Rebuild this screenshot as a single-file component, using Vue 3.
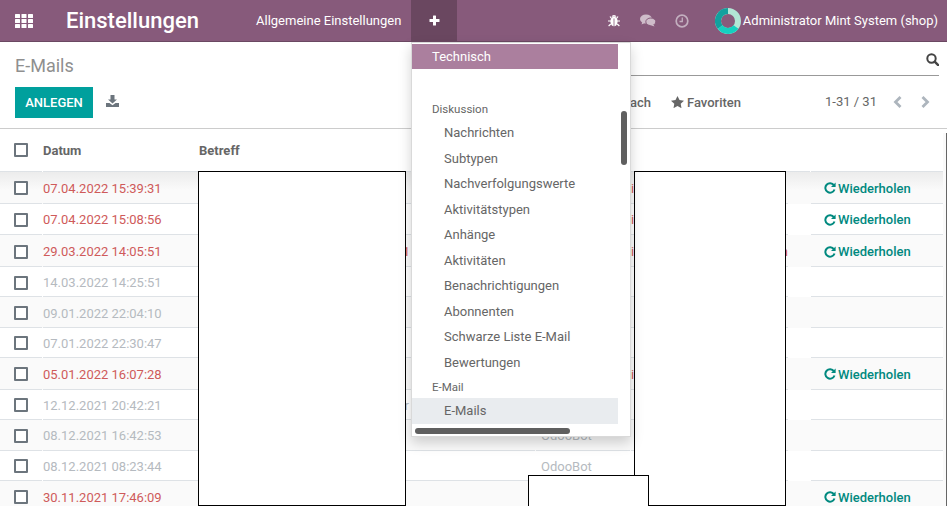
<template>
  <div class="page">
    <header class="navbar">
      <a class="apps">
        <svg width="18" height="14" viewBox="0 0 18 14" fill="#fff">
          <template v-for="r in 3" :key="r">
            <rect v-for="c in 3" :key="c" :x="(c - 1) * 6.5" :y="(r - 1) * 5" width="5" height="4" rx="0.5" />
          </template>
        </svg>
      </a>
      <span class="brand">Einstellungen</span>
      <a class="nav-link">Allgemeine Einstellungen</a>
      <a class="nav-plus">
        <svg width="11" height="11" viewBox="0 0 11 11" fill="#fff">
          <rect x="4" y="0.5" width="3" height="10" rx="0.5" />
          <rect x="0.5" y="4" width="10" height="3" rx="0.5" />
        </svg>
      </a>
      <div class="systray">
        <svg class="tray-bug" width="12" height="13" viewBox="0 0 12 13" fill="#fff">
          <ellipse cx="6" cy="7.5" rx="3.6" ry="4.8" />
          <path d="M3.5 2.8a2.6 2.6 0 0 1 5 0z" />
          <path d="M2 2.5l1.5 2M10 2.5L8.500 4.500M0 7h3M9 7h3M.6 12l2.200-2M11.400 12L9.200 10" stroke="#fff" stroke-width="1.200" fill="none" />
          <rect x="5.600" y="4.500" width="0.800" height="8" fill="#875a7b" />
        </svg>
        <svg class="tray-chat" width="16" height="13" viewBox="0 0 16 13" fill="#cfbdca">
          <ellipse cx="6" cy="5" rx="6" ry="4.500" />
          <path d="M2.500 7.500L1.500 10.500 6 8.500z" />
          <ellipse cx="10.800" cy="7.800" rx="5" ry="3.800" stroke="#875a7b" stroke-width="1" />
          <path d="M13 10l1.500 2.500L10 11z" />
        </svg>
        <svg class="tray-clock" width="14" height="14" viewBox="0 0 14 14" fill="none" stroke="#c3afbf" stroke-width="1.700">
          <circle cx="7" cy="7" r="5.800" />
          <path d="M7.300 3.500v4H4.500" stroke-width="1.300" />
        </svg>
        <svg class="donut" width="26" height="26" viewBox="0 0 26 26" fill="none" stroke-width="6">
          <circle cx="13" cy="13" r="10" stroke="#b2e6d5" />
          <path d="M5.200 19.200A10 10 0 0 1 13 3" stroke="#12a09e" />
          <path d="M21 19A10 10 0 0 1 5.200 19.200" stroke="#14d0c0" />
        </svg>
        <span class="user">Administrator Mint System (shop)</span>
      </div>
    </header>

    <section class="control-panel">
      <div class="cp-left">
        <h1 class="title">E-Mails</h1>
        <div class="actions">
          <button class="btn-create">ANLEGEN</button>
          <svg class="download" width="13" height="12" viewBox="0 0 13 12" fill="#6c757d">
            <path d="M4.500 0h4v4.500H11L6.500 8.500 2 4.500h2.500z" />
            <path d="M0 8h3.500l3 2.200L9.500 8H13v4H0z" />
          </svg>
        </div>
      </div>
      <div class="cp-right">
        <div class="search">
          <svg width="13" height="13" viewBox="0 0 13 13" fill="none" stroke="#444" stroke-width="2">
            <circle cx="5.500" cy="5.500" r="4.200" />
            <path d="M8.700 8.700l3.500 3.500" stroke-width="2.400" stroke-linecap="round" />
          </svg>
        </div>
        <div class="tools">
          <div class="filters">
            <span>Filter</span>
            <span>Gruppieren nach</span>
            <span class="fav">
              <svg width="13" height="12" viewBox="0 0 13 12" fill="#666">
                <path d="M6.500 0l2 4.100 4.500.6-3.300 3.100.8 4.400-4-2.200-4 2.200.8-4.400L0 4.700l4.500-.6z" />
              </svg>
              Favoriten
            </span>
          </div>
          <div class="pager">
            <span class="pager-text">1-31 / 31</span>
            <svg width="12" height="14" viewBox="0 0 12 14" fill="none" stroke="#adb5bd" stroke-width="2.800">
              <path d="M8.500 2L3.500 7l5 5" />
            </svg>
            <svg width="12" height="14" viewBox="0 0 12 14" fill="none" stroke="#adb5bd" stroke-width="2.800">
              <path d="M3.500 2l5 5-5 5" />
            </svg>
          </div>
        </div>
      </div>
    </section>

    <div class="list">
      <div class="row head">
        <div class="cell check"><span class="box"></span></div>
        <div class="cell">Datum</div>
        <div class="cell">Betreff</div>
        <div class="cell"></div>
        <div class="cell"></div>
        <div class="cell"></div>
      </div>
      <div
        v-for="(m, i) in mails"
        :key="m.date"
        class="row"
        :class="{ failed: m.failed, sent: !m.failed, striped: i % 2 === 0, first: i === 0 }"
      >
        <div class="cell check"><span class="box"></span></div>
        <div class="cell">{{ m.date }}</div>
        <div class="cell subject" :class="{ nudged: m.subject === '1' }">{{ m.subject }}</div>
        <div class="cell author">{{ m.author }}</div>
        <div class="cell recipient">
          <span>{{ m.failed ? "i" : "" }}</span><span>{{ m.tail }}</span>
        </div>
        <div class="cell retry">
          <template v-if="m.failed">
            <svg width="12" height="12" viewBox="0 0 12 12" fill="none">
              <path d="M9.900 3.200A4.700 4.700 0 1 0 10.500 7.500" stroke="#00897f" stroke-width="2" />
              <path d="M11.600 0.500v4.600H7z" fill="#00897f" />
            </svg>
            Wiederholen
          </template>
        </div>
      </div>
    </div>

    <div class="scroll-main"></div>

    <div class="redact r1"></div>
    <div class="redact r2"></div>
    <div class="redact r3"></div>

    <nav class="dropdown">
      <div class="menu-active">Technisch</div>
      <template v-for="group in menu" :key="group.name">
        <div class="menu-header">{{ group.name }}</div>
        <div
          v-for="item in group.items"
          :key="item"
          class="menu-item"
          :class="{ current: item === 'E-Mails' }"
        >
          {{ item }}
        </div>
      </template>
      <span class="thumb-v"></span>
      <span class="thumb-h"></span>
    </nav>
  </div>
</template>

<script setup>
// author only where it isn't under the dropdown
const mails = [
  { date: "07.04.2022 15:39:31", failed: true },
  { date: "07.04.2022 15:08:56", failed: true },
  { date: "29.03.2022 14:05:51", failed: true, subject: "1", tail: "n" },
  { date: "14.03.2022 14:25:51" },
  { date: "09.01.2022 22:04:10" },
  { date: "07.01.2022 22:30:47" },
  { date: "05.01.2022 16:07:28", failed: true },
  { date: "12.12.2021 20:42:21", subject: "r" },
  { date: "08.12.2021 16:42:53", author: "OdooBot" },
  { date: "08.12.2021 08:23:44", author: "OdooBot" },
  { date: "30.11.2021 17:46:09", failed: true },
];

const menu = [
  {
    name: "Diskussion",
    items: [
      "Nachrichten",
      "Subtypen",
      "Nachverfolgungswerte",
      "Aktivitätstypen",
      "Anhänge",
      "Aktivitäten",
      "Benachrichtigungen",
      "Abonnenten",
      "Schwarze Liste E-Mail",
      "Bewertungen",
    ],
  },
  { name: "E-Mail", items: ["E-Mails"] },
];
</script>

<style>
html,
body {
  margin: 0;
  overflow: hidden;
  background: #fff;
}
</style>

<style scoped>
.page {
  position: relative;
  width: 947px;
  height: 506px;
  overflow: hidden;
  font-family: Roboto, "Liberation Sans", sans-serif;
  font-size: 13px;
  color: #666;
  background: #fff;
}

/* navbar */
.navbar {
  display: flex;
  align-items: center;
  height: 41px;
  background: #875a7b;
  border-bottom: 1px solid #6b4862;
  color: #fff;
}
.apps {
  display: flex;
  padding-left: 15px;
  width: 51px;
}
.brand {
  font-size: 22px;
  font-weight: 500;
  width: 190px;
}
.nav-link {
  width: 155px;
}
.nav-plus {
  display: flex;
  align-items: center;
  justify-content: center;
  width: 46px;
  height: 41px;
  background: #6a4760;
}
.systray {
  display: flex;
  align-items: center;
  margin-left: auto;
  padding-right: 9px;
}
.tray-chat {
  margin-left: 20px;
}
.tray-clock {
  margin-left: 19px;
}
.donut {
  margin-left: 26px;
}
.user {
  margin-left: 2px;
}

/* control panel */
.control-panel {
  display: grid;
  grid-template-columns: 479px 468px;
  height: 86px;
  border-bottom: 1px solid #ccc;
}
.cp-left {
  padding-left: 15px;
}
.title {
  margin: 0;
  padding-top: 13px;
  height: 32px;
  font-size: 18px;
  line-height: 22px;
  font-weight: 400;
  color: #8f8f8f;
}
.actions {
  display: flex;
  align-items: center;
}
.btn-create {
  width: 78px;
  height: 31px;
  border: none;
  padding: 0;
  background: #00a09d;
  color: #fff;
  font: 500 13px Roboto, sans-serif;
}
.download {
  margin-left: 13px;
  margin-top: -3px;
}
.search {
  display: flex;
  justify-content: flex-end;
  align-items: center;
  height: 32px;
  margin: 0 8px 0 0;
  padding-top: 1px;
  border-bottom: 1px solid #999;
}
.tools {
  display: flex;
  align-items: center;
  height: 52px;
}
.filters {
  display: flex;
  justify-content: flex-end;
  gap: 20px;
  width: 262px;
  font-weight: 500;
}
.fav {
  display: flex;
  align-items: center;
  gap: 3px;
}
.pager {
  display: flex;
  align-items: center;
  margin-left: 84px;
  gap: 15px;
}
.pager-text {
  margin-top: -2px;
}

/* list */
.list {
  width: 943px;
}
.row {
  display: grid;
  grid-template-columns: 42px 155px 336px 94px 179px 132px;
  column-gap: 1px;
  height: 31.67px;
}
.row.sent {
  height: 30.4px;
  color: #b5bac0;
}
.row.failed {
  color: #cf5a5a;
}
.row.striped {
  background: #fafafa;
}
.row.first {
  background: linear-gradient(#ececec, #fafafa 18px);
}
.row.head {
  height: 43px;
  background: #fff;
  color: #666;
  font-weight: 700;
}
.row.head .cell {
  padding-top: 0;
}
.cell {
  display: flex;
  align-items: center;
  min-width: 0;
  padding-top: 2px;
  border-bottom: 1px solid #dee2e6;
  box-sizing: border-box;
}
.check {
  padding-left: 14px;
}
.box {
  box-sizing: border-box;
  width: 14px;
  height: 14px;
  border: 2px solid #6c757d;
  border-radius: 1px;
  background: #fff;
}
.subject {
  justify-content: flex-end;
  padding-right: 126px;
}
.subject.nudged {
  padding-right: 125px;
}
.author {
  padding-left: 5px;
}
.recipient {
  justify-content: space-between;
  width: 157px;
}
.retry {
  gap: 2px;
  padding-left: 13px;
  color: #00897f;
  font-weight: 500;
}
.scroll-main {
  position: absolute;
  top: 133px;
  right: 0;
  bottom: 0;
  width: 1px;
  background: #666;
  border-left: 3px solid #fafafa;
}

/* blanked out parts of the shot */
.redact {
  position: absolute;
  box-sizing: border-box;
  background: #fff;
  border: 1px solid #000;
}
.r1 {
  left: 198px;
  top: 171px;
  width: 208px;
  height: 335px;
}
.r2 {
  left: 634px;
  top: 171px;
  width: 152px;
  height: 335px;
}
.r3 {
  left: 528px;
  top: 475px;
  width: 121px;
  height: 40px;
}

/* dropdown */
.dropdown {
  position: absolute;
  left: 411px;
  top: 42px;
  box-sizing: border-box;
  width: 220px;
  height: 395px;
  padding: 1px 12px 0 0;
  overflow: hidden;
  background: #fff;
  border: 1px solid rgba(0, 0, 0, 0.15);
  box-shadow: 0 6px 12px rgba(0, 0, 0, 0.175);
}
.menu-active {
  height: 25px;
  line-height: 25px;
  padding-left: 20px;
  margin-bottom: 28px;
  background: #ab7f9e;
  color: #fff;
}
.menu-header {
  height: 23px;
  line-height: 24px;
  padding-left: 20px;
  font-size: 11.500px;
}
.menu-item {
  height: 25.500px;
  line-height: 25.500px;
  padding-left: 32px;
}
.menu-item.current {
  background: #e9ecef;
}
.thumb-v {
  position: absolute;
  left: 209px;
  top: 68px;
  width: 6px;
  height: 54px;
  border-radius: 3px;
  background: #5f5f5f;
}
.thumb-h {
  position: absolute;
  left: 3px;
  top: 385px;
  width: 155px;
  height: 6px;
  border-radius: 3px;
  background: #5f5f5f;
}
</style>
